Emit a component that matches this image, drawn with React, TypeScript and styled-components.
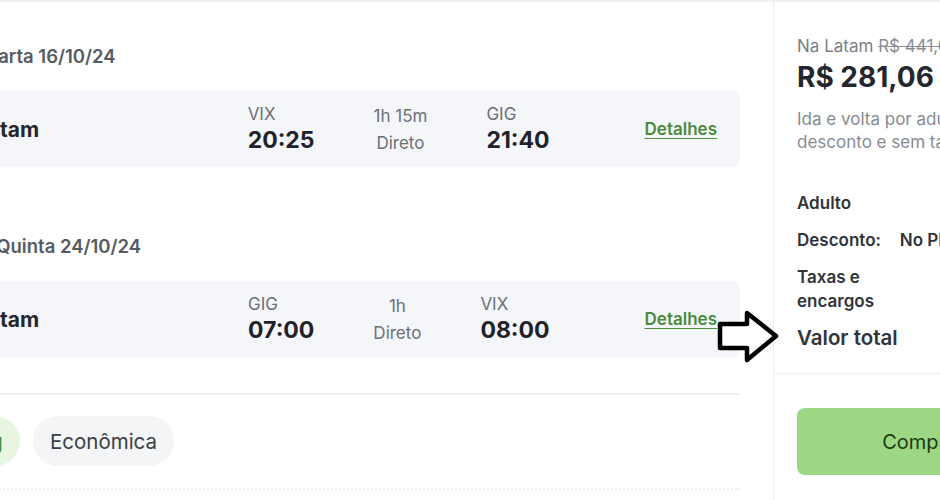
import React from 'react';
import styled, { createGlobalStyle } from 'styled-components';

const GlobalStyle = createGlobalStyle`
  body {
    margin: 0;
    background: #ffffff;
    font-family: Inter, 'Open Sans', sans-serif;
    overflow: hidden;
  }
`;

const Page = styled.div`
  display: flex;
  width: 940px;
  height: 500px;
  overflow: hidden;
  position: relative;
  border-top: 2px solid #f1f2f4;
  box-sizing: border-box;
`;

const Main = styled.div`
  flex: 0 0 auto;
  width: 873px;
  margin-left: -100px;
  padding-right: 33px;
  box-sizing: border-box;
  display: flex;
  flex-direction: column;
`;

const Leg = styled.section<{ $top: number }>`
  padding-top: ${(p) => p.$top}px;
`;

const LegTitle = styled.h2<{ $indent: number }>`
  margin: 0 0 23px;
  padding-left: ${(p) => p.$indent}px;
  font-size: 18.5px;
  line-height: 24px;
  font-weight: 600;
  color: #555b63;
`;

const FlightCard = styled.div`
  display: flex;
  align-items: center;
  height: 76px;
  padding: 0 23px 0 76px;
  background: #f4f6f9;
  border-radius: 8px;
`;

const Airline = styled.div`
  flex: 1;
  font-size: 21px;
  font-weight: 700;
  color: #23272d;
`;

const Stops = styled.div`
  display: flex;
  align-items: center;
  gap: 59px;
`;

const Point = styled.div`
  display: flex;
  flex-direction: column;
  gap: 2px;
`;

const Code = styled.span`
  font-size: 17px;
  line-height: 20px;
  color: #6b7077;
`;

const Time = styled.span`
  font-size: 23px;
  line-height: 28px;
  font-weight: 700;
  color: #1f2329;
`;

const Duration = styled.div`
  display: flex;
  flex-direction: column;
  align-items: center;
  gap: 7px;
  font-size: 17px;
  line-height: 20px;
  color: #6b7077;
`;

const DetailsLink = styled.a`
  margin-left: 95px;
  font-size: 17px;
  font-weight: 600;
  color: #4b8b3b;
  text-decoration: underline;
  text-underline-offset: 3px;
  cursor: pointer;
`;

const Divider = styled.hr<{ $dotted?: boolean }>`
  margin: 0;
  border: 0;
  border-top: 2px ${(p) => (p.$dotted ? 'dotted' : 'solid')} #eef0f2;
`;

const ChipRow = styled.div`
  display: flex;
  gap: 13px;
  padding: 21px 0 22px 35px;
`;

const Chip = styled.span<{ $tone?: 'green' }>`
  display: inline-flex;
  align-items: center;
  height: 50px;
  padding: 0 17px;
  border-radius: 25px;
  font-size: 20.5px;
  color: ${(p) => (p.$tone === 'green' ? '#4b8b3b' : '#3c4045')};
  background: ${(p) => (p.$tone === 'green' ? '#e7f5e1' : '#f3f5f7')};
`;

const Summary = styled.aside`
  flex: 0 0 300px;
  border-left: 1px solid #eceef1;
  display: flex;
  flex-direction: column;
`;

const SummaryBlock = styled.div<{ $bordered?: boolean }>`
  padding: ${(p) => (p.$bordered ? '34px 24px 23px 23px' : '34px 24px 0 23px')};
  border-bottom: ${(p) => (p.$bordered ? '1px solid #eceef1' : 'none')};
`;

const OldPrice = styled.div`
  font-size: 17px;
  line-height: 20px;
  color: #7a7f86;

  s {
    color: #8a8f96;
  }
`;

const Price = styled.div`
  margin-top: 4px;
  font-size: 28px;
  line-height: 34px;
  font-weight: 700;
  color: #23272d;
`;

const Note = styled.p`
  margin: 14px 0 0;
  font-size: 17px;
  line-height: 23px;
  color: #868b92;
`;

const Breakdown = styled.div`
  margin-top: 37px;
  display: flex;
  flex-direction: column;
  gap: 13px;
`;

const Row = styled.div`
  display: flex;
  align-items: flex-start;
  justify-content: space-between;
  gap: 8px;
`;

const RowLabel = styled.span<{ $total?: boolean }>`
  width: ${(p) => (p.$total ? 'auto' : '92px')};
  white-space: ${(p) => (p.$total ? 'nowrap' : 'normal')};
  font-size: ${(p) => (p.$total ? '20.5px' : '17px')};
  line-height: 24px;
  font-weight: 600;
  color: #30343a;
`;

const RowValue = styled.span<{ $total?: boolean }>`
  flex: 1;
  text-align: right;
  white-space: nowrap;
  font-size: ${(p) => (p.$total ? '20.5px' : '17px')};
  line-height: 24px;
  font-weight: 600;
  color: #30343a;
`;

const BuyButton = styled.button`
  width: 100%;
  height: 67px;
  border: 0;
  border-radius: 8px;
  background: #9cd883;
  color: #1d3a14;
  font-family: inherit;
  font-size: 20px;
  cursor: pointer;
`;

const Pointer = styled.svg`
  position: absolute;
  left: 716px;
  top: 305px;
`;

type Flight = {
  from: string;
  dep: string;
  duration: string;
  to: string;
  arr: string;
};

const FlightRow: React.FC<{ f: Flight }> = ({ f }) => (
  <FlightCard>
    <Airline>Latam</Airline>
    <Stops>
      <Point>
        <Code>{f.from}</Code>
        <Time>{f.dep}</Time>
      </Point>
      <Duration>
        <span>{f.duration}</span>
        <span>Direto</span>
      </Duration>
      <Point>
        <Code>{f.to}</Code>
        <Time>{f.arr}</Time>
      </Point>
    </Stops>
    <DetailsLink>Detalhes</DetailsLink>
  </FlightCard>
);

const App: React.FC = () => {
  return (
    <>
      <GlobalStyle />
      <Page>
        <Main>
          <Leg $top={42}>
            <LegTitle $indent={30}>Ida · Quarta 16/10/24</LegTitle>
            <FlightRow f={{ from: 'VIX', dep: '20:25', duration: '1h 15m', to: 'GIG', arr: '21:40' }} />
          </Leg>
          <Leg $top={67}>
            <LegTitle $indent={35}>Volta · Quinta 24/10/24</LegTitle>
            <FlightRow f={{ from: 'GIG', dep: '07:00', duration: '1h', to: 'VIX', arr: '08:00' }} />
          </Leg>
          <div style={{ height: 36 }} />
          <Divider />
          <ChipRow>
            <Chip $tone="green">1 bag</Chip>
            <Chip>Econômica</Chip>
          </ChipRow>
          <Divider $dotted />
        </Main>
        <Summary>
          <SummaryBlock $bordered>
            <OldPrice>
              Na Latam <s>R$ 441,00</s>
            </OldPrice>
            <Price>R$ 281,06</Price>
            <Note>Ida e volta por adulto, com desconto e sem taxas</Note>
            <Breakdown>
              <Row>
                <RowLabel>Adulto</RowLabel>
                <RowValue>R$ 281,06</RowValue>
              </Row>
              <Row>
                <RowLabel>Desconto:</RowLabel>
                <RowValue>No PIX -R$ 160,00</RowValue>
              </Row>
              <Row>
                <RowLabel>Taxas e encargos</RowLabel>
                <RowValue>R$ 0,00</RowValue>
              </Row>
              <Row>
                <RowLabel $total>Valor total</RowLabel>
                <RowValue $total>R$ 281,06</RowValue>
              </Row>
            </Breakdown>
          </SummaryBlock>
          <SummaryBlock>
            <BuyButton>Comprar</BuyButton>
          </SummaryBlock>
        </Summary>
        <Pointer width="64" height="58" viewBox="0 0 64 58">
          <polygon
            points="4,17 31,17 31,6 60,29 31,53 31,41 4,41"
            fill="#ffffff"
            stroke="#000000"
            strokeWidth="4.5"
            strokeLinejoin="round"
          />
        </Pointer>
      </Page>
    </>
  );
};

export default App;
